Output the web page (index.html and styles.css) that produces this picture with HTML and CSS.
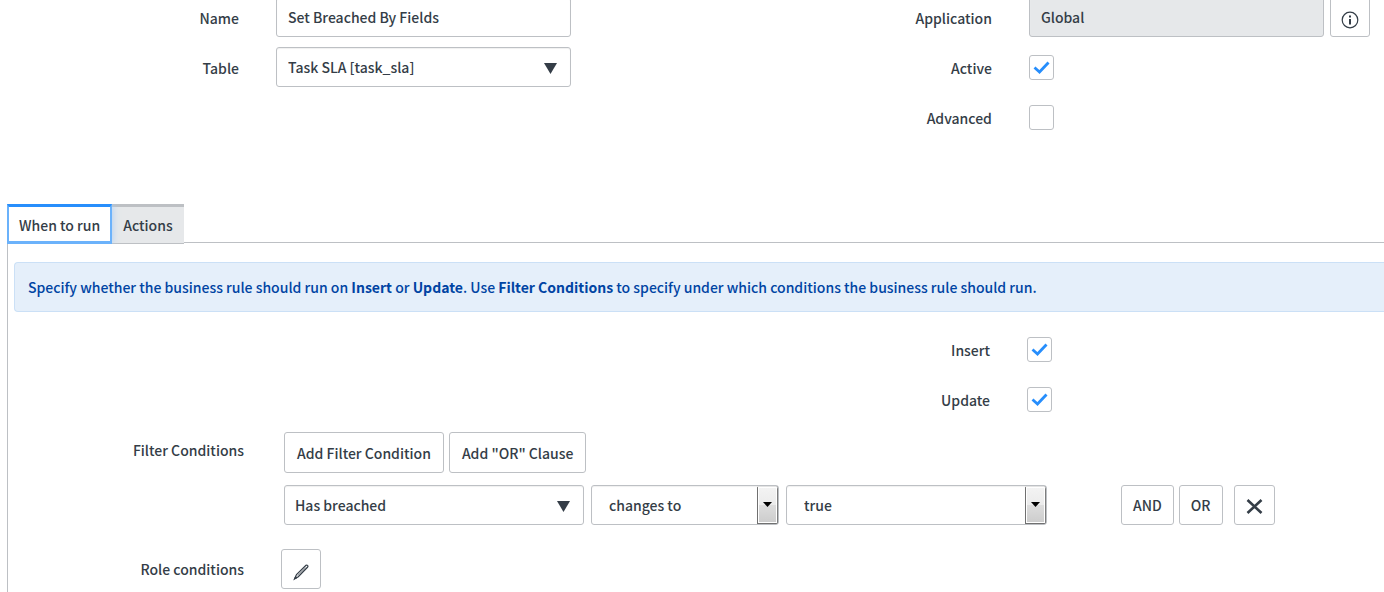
FILE: index.html
```html
<!DOCTYPE html>
<html lang="en">
<head>
    <meta charset="UTF-8">
    <title>Business Rule</title>
    <link rel="stylesheet" href="styles.css">
</head>
<body>
<form>
    <div class="header">
        <div class="column column-left">
            <div class="row">
                <label for="name">Name</label>
                <input id="name" class="field" type="text" value="Set Breached By Fields">
            </div>
            <div class="row">
                <label for="table">Table</label>
                <select id="table" class="field picker">
                    <option>Task SLA [task_sla]</option>
                </select>
            </div>
        </div>
        <div class="column column-right">
            <div class="row">
                <label for="application">Application</label>
                <input id="application" class="field" type="text" value="Global" readonly>
                <button type="button" class="btn icon-btn" aria-label="Application info">
                    <svg width="18" height="18" viewBox="0 0 18 18">
                        <circle cx="9" cy="9" r="7.8" fill="none" stroke="currentColor" stroke-width="1.2"/>
                        <path d="M8 4.5h2v2H8zM8 8h2v5.5H8z" fill="currentColor"/>
                    </svg>
                </button>
            </div>
            <div class="row">
                <label for="active">Active</label>
                <input id="active" class="check" type="checkbox" checked>
            </div>
            <div class="row">
                <label for="advanced">Advanced</label>
                <input id="advanced" class="check" type="checkbox">
            </div>
        </div>
    </div>

    <div class="tabs">
        <button type="button" class="tab tab-active">When to run</button>
        <button type="button" class="tab">Actions</button>
    </div>
    <div class="panel">
        <p class="message">Specify whether the business rule should run on <b>Insert</b> or <b>Update</b>. Use <b>Filter Conditions</b> to specify under which conditions the business rule should run.</p>
        <div class="events">
            <div class="row">
                <label for="insert">Insert</label>
                <input id="insert" class="check" type="checkbox" checked>
            </div>
            <div class="row">
                <label for="update">Update</label>
                <input id="update" class="check" type="checkbox" checked>
            </div>
        </div>
        <div class="condition-row">
            <span class="caption">Filter Conditions</span>
            <div class="filter">
                <div class="actions">
                    <button type="button" class="btn">Add Filter Condition</button>
                    <button type="button" class="btn">Add "OR" Clause</button>
                </div>
                <div class="clause">
                    <select class="field picker clause-field" aria-label="Field">
                        <option>Has breached</option>
                    </select>
                    <select class="field native clause-operator" aria-label="Operator">
                        <option>changes to</option>
                    </select>
                    <select class="field native clause-value" aria-label="Value">
                        <option>true</option>
                    </select>
                    <div class="clause-buttons">
                        <button type="button" class="btn">AND</button>
                        <button type="button" class="btn">OR</button>
                        <button type="button" class="btn remove" aria-label="Remove condition">
                            <svg width="17" height="17" viewBox="0 0 17 17">
                                <path d="M1.5 2l14 13M15.5 2l-14 13" stroke="currentColor" stroke-width="2.6"/>
                            </svg>
                        </button>
                    </div>
                </div>
            </div>
        </div>
        <div class="condition-row role-row">
            <span class="caption">Role conditions</span>
            <button type="button" class="btn icon-btn" aria-label="Edit role conditions">
                <svg width="18" height="18" viewBox="0 0 18 18" fill="none" stroke="currentColor">
                    <path d="M2.5 16l2-4.400L14 2.300q.8-.6 1.600.1t.1 1.600L6.300 13.700z" stroke-width="1.200"/>
                    <path d="M2.500 16l1.100-2.600 1.400 1.300z" fill="currentColor"/>
                    <path d="M5.500 12.700l8-7.900" stroke-width=".6"/>
                </svg>
            </button>
        </div>
    </div>
</form>
</body>
</html>
```

FILE: styles.css
```css
*{
    box-sizing: border-box;
}
body{
    margin: 0;
    overflow: hidden;
    background: #fff;
    color: #343d47;
    font: 500 14px/20px "Noto Sans CJK SC", "Open Sans", sans-serif;
}
input, select, button{
    margin: 0;
    font: inherit;
    color: inherit;
}
form{
    display: flow-root;
}

/* record header */
.header{
    display: flex;
    margin-top: -3px;
    height: 207px;
}
.column{
    display: flex;
    flex-direction: column;
    gap: 10px;
}
.column-left{
    width: 54.4%;
    padding-right: 182px;
}
.column-right{
    flex: 1;
    padding-right: 14px;
}
.row{
    display: flex;
    align-items: center;
    height: 40px;
}
.row label{
    flex: none;
    width: 239px;
    margin-right: 37px;
    padding-top: 2px;
    text-align: right;
}
.row .field{
    flex: 1;
    min-width: 0;
}
.row .btn{
    margin-left: 6px;
}

/* controls */
.field{
    height: 40px;
    padding: 0 11px;
    border: 1px solid #bdc0c4;
    border-radius: 3px;
    background: #fff;
    box-shadow: inset 0 1px 1px #f0f0f0;
}
.field[readonly]{
    background: #e6e8ea;
}
select.field{
    appearance: none;
}
.picker{
    background: #fff url("data:image/svg+xml,%3Csvg xmlns='http://www.w3.org/2000/svg' width='13' height='14'%3E%3Cpath d='M0 3h13L6.500 14z' fill='%23343d47'/%3E%3C/svg%3E") no-repeat right 13px center;
}
select.native{
    padding-left: 17px;
    background: #fff url("data:image/svg+xml,%3Csvg xmlns='http://www.w3.org/2000/svg' width='21' height='38'%3E%3Cdefs%3E%3ClinearGradient id='g' x2='0' y2='1'%3E%3Cstop stop-color='%23f3f3f3'/%3E%3Cstop offset='.5' stop-color='%23ebebeb'/%3E%3Cstop offset='.5' stop-color='%23dddddd'/%3E%3Cstop offset='1' stop-color='%23cdcdcd'/%3E%3C/linearGradient%3E%3C/defs%3E%3Crect x='.5' y='.5' width='20' height='37' fill='%23fff' stroke='%23707070'/%3E%3Crect x='2' y='2' width='17' height='34' fill='url(%23g)'/%3E%3Cpath d='M6 16h9l-4.500 5z'/%3E%3C/svg%3E") no-repeat right center;
}
.check{
    appearance: none;
    width: 25px;
    height: 25px;
    border: 1px solid #bdc0c4;
    border-radius: 3px;
    background: #fff;
}
.check:checked{
    background: url("data:image/svg+xml,%3Csvg xmlns='http://www.w3.org/2000/svg' width='17' height='13'%3E%3Cpath d='M1.500 6.500L6.500 11l9-9.500' fill='none' stroke='%23278efc' stroke-width='2.800'/%3E%3C/svg%3E") no-repeat center;
}
.btn{
    height: 40px;
    padding: 0 12px;
    border: 1px solid #bdc0c4;
    border-radius: 3px;
    background: #fff;
    white-space: nowrap;
}
.icon-btn{
    flex: none;
    width: 40px;
    padding: 5px 0 0;
}
.icon-btn svg, .remove svg{
    display: block;
    margin: 0 auto;
}

/* tabs */
.tabs{
    position: relative;
    display: flex;
    height: 38px;
    margin-left: 7px;
}
.tab{
    height: 40px;
    padding: 0 11px;
    border: 0;
    border-top: 3px solid #bdc0c4;
    border-bottom: 1px solid #bdc0c4;
    background: #e6e8ea;
}
.tab-active{
    z-index: 1;
    padding: 1px 10px 0;
    border: 2px solid #6bb2fb;
    border-top: 3px solid #278efc;
    border-bottom-width: 3px;
    background: #fff;
    box-shadow: 0 0 8px #a9cdf5;
    clip-path: inset(0 -10px 0 0);
}
.panel{
    margin-left: 7px;
    padding: 19px 0 20px 6px;
    border: solid #bdc0c4;
    border-width: 1px 0 0 1px;
}
.message{
    margin: 0;
    padding: 14px 13px;
    border: 1px solid #cbe0f6;
    border-right: 0;
    border-radius: 4px 0 0 4px;
    background: #e5effa;
    color: #0044a3;
}
.events{
    display: flex;
    flex-direction: column;
    gap: 10px;
    margin: 17px 0 13px;
    padding-left: 53.8%;
}

/* conditions */
.condition-row{
    display: flex;
}
.caption{
    flex: none;
    width: 230px;
    margin-right: 40px;
    padding-top: 8px;
    text-align: right;
}
.filter{
    flex: 1;
}
.actions{
    display: flex;
    gap: 5px;
}
.actions .btn{
    height: 41px;
}
.clause{
    display: flex;
    margin-top: 12px;
    gap: 7px;
}
.clause .picker{
    padding-left: 10px;
}
.clause-field{
    flex: 0 1 300px;
}
.clause-operator{
    flex: 0 1 188px;
}
.clause-value{
    flex: 0 1 261px;
}
.clause-buttons{
    display: flex;
    gap: 5px;
    margin-left: 67px;
}
.clause-buttons .btn{
    padding: 0 11px;
}
.clause-buttons .remove{
    width: 41px;
    margin-left: 6px;
    padding: 3px 0 0;
}
.role-row{
    margin-top: 24px;
}
.role-row .caption{
    margin-right: 37px;
    padding-top: 10px;
}
```
